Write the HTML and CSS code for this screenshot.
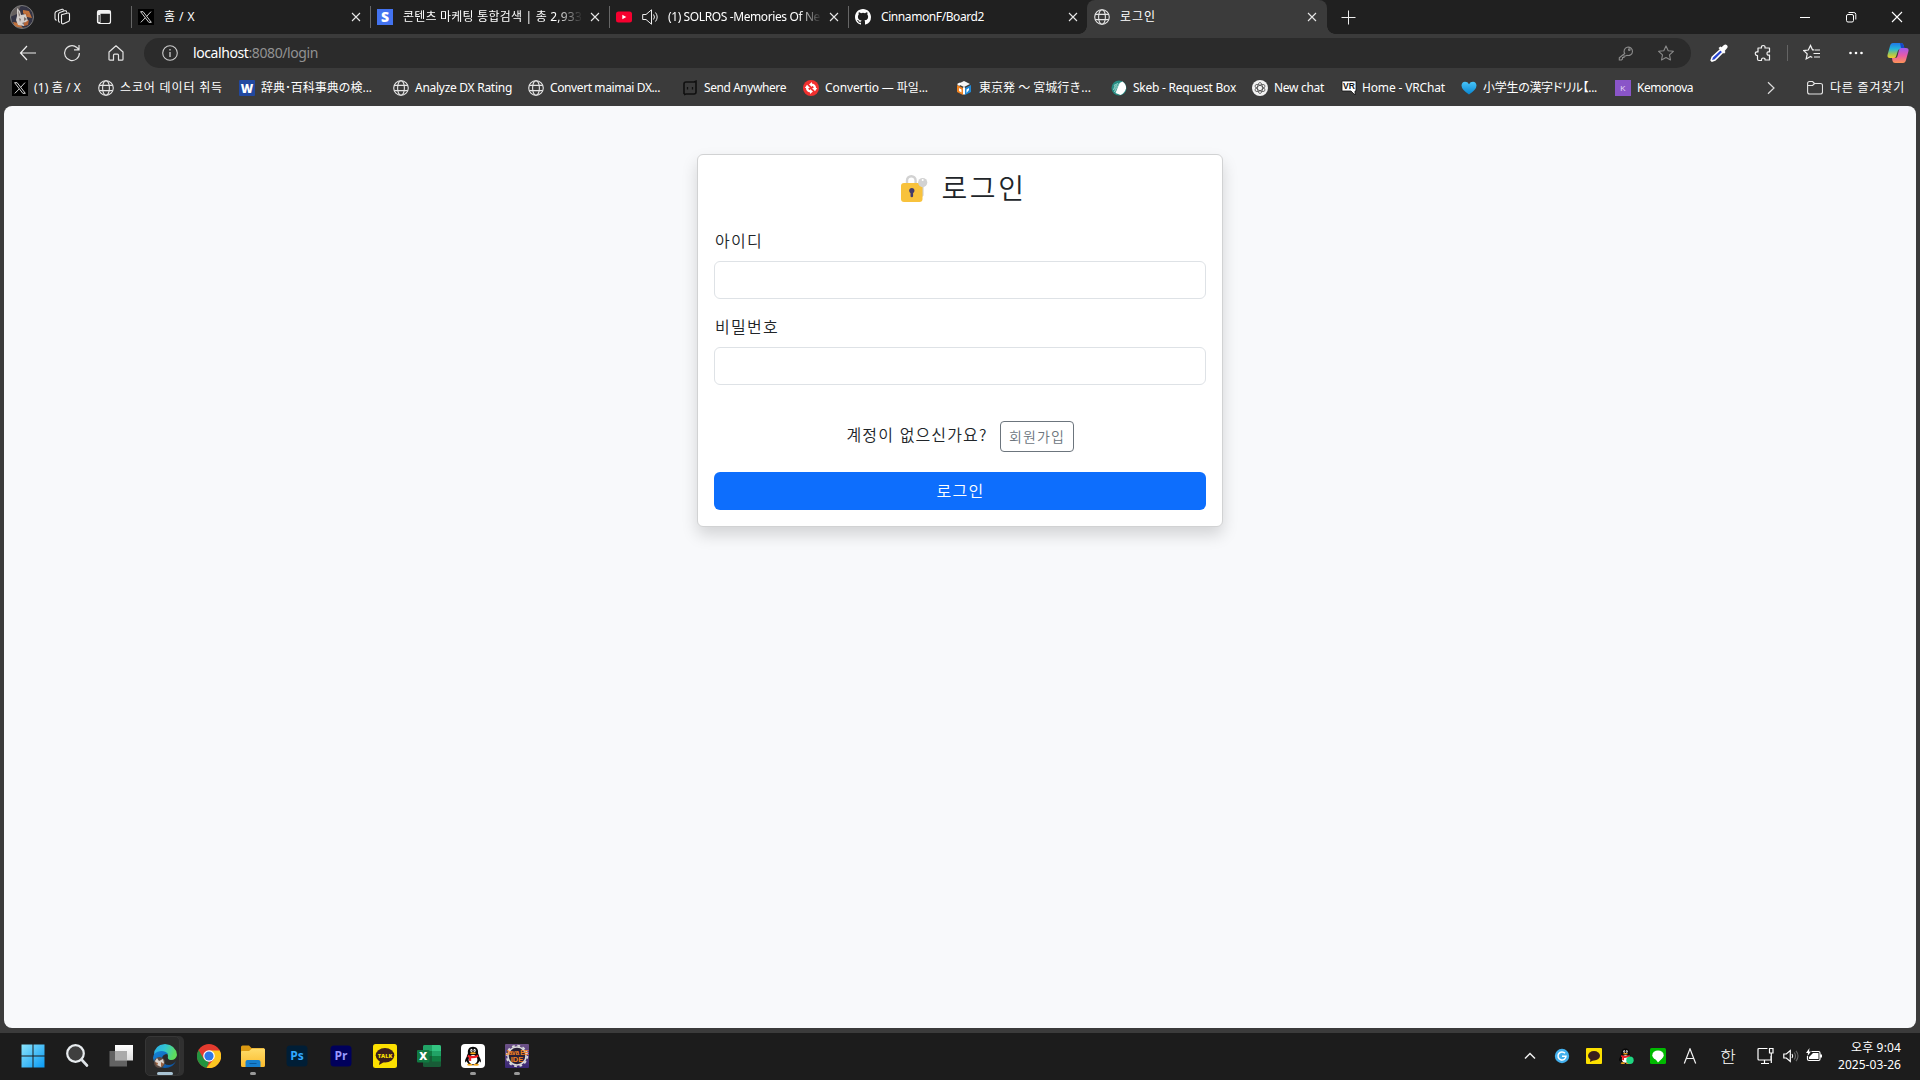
FILE: index.html
```html
<!DOCTYPE html>
<html lang="ko">
<head>
<meta charset="utf-8">
<title>로그인</title>
<link rel="stylesheet" href="styles.css">
</head>
<body>
<svg class="defs" width="0" height="0">
  <defs>
    <symbol id="globe" viewBox="0 0 16 16"><g fill="none" stroke="#e4e4e4" stroke-width="1.1"><circle cx="8" cy="8" r="7.3"/><ellipse cx="8" cy="8" rx="3.4" ry="7.3"/><path d="M1.2 5.4h13.6M1.2 10.6h13.6"/></g></symbol>
    <symbol id="close" viewBox="0 0 16 16"><path d="M4 4l8 8M12 4l-8 8" fill="none" stroke="#e8e8e8" stroke-width="1.1"/></symbol>
    <symbol id="xlogo" viewBox="0 0 16 16"><path fill="#000" d="M0 0h16v16H0z"/><path fill="none" stroke="#e8e8e8" stroke-width=".9" d="M2.6 2.7h2.5l8.2 10.6h-2.5zM13 2.6L8.7 7.3M7.3 8.8L2.8 13.4"/></symbol>
    <symbol id="penguin" viewBox="0 0 24 24"><path d="M5 13c-2 3-2 5-1 6l2-3zM19 13c2 3 2 5 1 6l-2-3z" fill="#080808"/><path d="M12 2c-4 0-6 3-5.500 7C3 16 5 22 12 22s9-6 5.500-13C18 5 16 2 12 2z" fill="#080808"/><ellipse cx="12" cy="16" rx="4.800" ry="5" fill="#fff"/><ellipse cx="10.300" cy="6" rx="1.200" ry="1.800" fill="#fff"/><ellipse cx="13.700" cy="6" rx="1.200" ry="1.800" fill="#fff"/><circle cx="10.600" cy="6.300" r=".6"/><circle cx="13.400" cy="6.300" r=".6"/><ellipse cx="12" cy="9" rx="3.200" ry="1.100" fill="#f9a91a"/><path d="M6.500 10.500q5.500 3 11 0l.5 2.300q-4 2-8 1.700v3l-2.500-.3.2-3.300-1.700-.8z" fill="#ec1c24"/><ellipse cx="8.500" cy="21.500" rx="3" ry="1.100" fill="#f9a91a"/><ellipse cx="15.500" cy="21.500" rx="3" ry="1.100" fill="#f9a91a"/></symbol>
    <linearGradient id="win" x1="0" y1="0" x2="1" y2="1"><stop stop-color="#8be4fc"/><stop offset="1" stop-color="#0899f3"/></linearGradient>
    <linearGradient id="edgeTop" x1="0" y1="0" x2="1" y2=".3"><stop stop-color="#2aa9e8"/><stop offset=".5" stop-color="#31c6d4"/><stop offset="1" stop-color="#5fdd5b"/></linearGradient>
    <linearGradient id="edgeLow" x1="0" y1="0" x2="1" y2="1"><stop stop-color="#1685d8"/><stop offset="1" stop-color="#0b4f9e"/></linearGradient>
    <linearGradient id="folder" x1="0" y1="0" x2="0" y2="1"><stop stop-color="#ffdc6a"/><stop offset="1" stop-color="#fbbb2c"/></linearGradient>
    <linearGradient id="heart" x1="0" y1="0" x2="0" y2="1"><stop stop-color="#48c4f8"/><stop offset="1" stop-color="#0785d0"/></linearGradient>
    <linearGradient id="copA" x1="0" y1="0" x2="0" y2="1"><stop stop-color="#1f7ae8"/><stop offset=".4" stop-color="#25b6d8"/><stop offset=".75" stop-color="#a4c850"/><stop offset="1" stop-color="#f2cc2e"/></linearGradient>
    <linearGradient id="copB" x1="0" y1="0" x2="0" y2="1"><stop stop-color="#a05af0"/><stop offset=".5" stop-color="#e75aa9"/><stop offset="1" stop-color="#fd9356"/></linearGradient>
    <linearGradient id="paneA" x1="0" y1="0" x2="0" y2="1"><stop stop-color="#fff"/><stop offset="1" stop-color="#dcdcdc"/></linearGradient>
    <linearGradient id="eclipse" x1="0" y1="0" x2="0" y2="1"><stop stop-color="#6d5287"/><stop offset="1" stop-color="#392775"/></linearGradient>
    <clipPath id="round"><circle cx="12" cy="12" r="11.500"/></clipPath>
  </defs>
</svg>

<header class="tabstrip">
  <div class="strip-tools">
    <svg class="avatar" viewBox="0 0 24 24"><g clip-path="url(#round)"><path fill="#343445" d="M0 0h24v24H0z"/><path fill="#66605f" d="M0 0h11L7 9 0 12z"/><path fill="#c0713c" d="M13 5l6 1 3 7-5-1-4-4zM3 17l6 1 4 5-8-1z"/><path fill="#d3cdca" d="M7 3l3 3 1 4 5-1 1 4 1 3-4 5-6-1-2-5 1-4z"/><path fill="#7d706c" d="M9 13l2 1-1 3zM14 12l3 2-3 2zM8 5l2 5-1 2zM12 18l3-1-1 3z"/><path fill="#b56436" d="M14 18l5-3-1 5-4 1zM15 8l3 1-1 3z"/></g><circle cx="12" cy="12" r="11.500" fill="none" stroke="#797979"/></svg>
    <svg class="i18 at-copies" viewBox="0 0 18 18"><g fill="none" stroke="#eee" stroke-width="1.100" stroke-linejoin="round"><path d="M8.500 6.800l6.200-1.800q1.800-.3 1.800 1.500v5.300q0 1.300-1.200 1.700l-4.800 2.200q-2 .6-2-1.500z"/><path d="M13.500 4.500V3.800q-.3-1.500-2-1L6.800 4.500Q5.500 5 5.500 6.500v6.200q0 1.300 1.500 1.600"/><path d="M10.500 2.500q-.5-1.800-2.300-1L3.700 3.300Q2 4 2 5.500v5q0 1.600 1.700 1.800"/></g></svg>
    <svg class="i16 at-vertical" viewBox="0 0 16 16"><rect x="1.500" y="1.500" width="13" height="13" rx="2" fill="none" stroke="#f2f2f2" stroke-width="1.200"/><path d="M1.500 1.500h13v3.300h-13zM1.500 4h3v10h-3z" fill="#f2f2f2"/><path d="M2.500 6h1.200v7H2.500z" fill="#202020"/></svg>
  </div>
  <nav class="tabs">
    <div class="tab"><svg class="i16"><use href="#xlogo"/></svg><div class="tab-title"><span data-width="31">홈 / X</span></div><svg class="i16"><use href="#close"/></svg></div>
    <div class="tab"><svg class="i16" viewBox="0 0 16 16"><path fill="#4373f0" d="M0 0h16v16H0z"/><text x="8" y="13" text-anchor="middle" class="fav-bold" font-size="14">S</text></svg><div class="tab-title fade"><span data-width="179">콘텐츠 마케팅 통합검색 | 총 2,933</span></div><svg class="i16"><use href="#close"/></svg></div>
    <div class="tab"><svg class="i16" viewBox="0 0 16 16"><rect y="2.500" width="16" height="11" rx="2.500" fill="#f6002f"/><path d="M6.300 5.700v4.600L10.300 8z" fill="#fff"/></svg><svg class="i16" viewBox="0 0 16 16"><g fill="none" stroke="#eee" stroke-width="1"><path d="M.7 5.500H4L9.500.8v14.400L4 10.500H.7z"/><path d="M11.500 5.500q2 2.500 0 5M13.500 3.500q3.400 4.500 0 9"/></g></svg><div class="tab-title fade"><span data-width="152">(1) SOLROS -Memories Of Ne</span></div><svg class="i16"><use href="#close"/></svg></div>
    <div class="tab"><svg class="i16" viewBox="0 0 16 16"><path fill="#fff" d="M8 0C3.580 0 0 3.580 0 8c0 3.540 2.290 6.530 5.470 7.590.4.070.55-.17.55-.38 0-.19-.01-.82-.01-1.490-2.010.37-2.530-.49-2.690-.94-.09-.23-.48-.94-.82-1.130-.28-.15-.68-.52-.01-.53.63-.01 1.080.58 1.230.82.72 1.210 1.870.87 2.330.66.07-.52.28-.87.51-1.070-1.780-.2-3.640-.89-3.640-3.950 0-.87.31-1.590.82-2.150-.08-.2-.36-1.020.08-2.120 0 0 .67-.21 2.200.82a7.600 7.600 0 0 1 4 0c1.530-1.040 2.200-.82 2.200-.82.44 1.100.16 1.920.08 2.120.51.56.82 1.270.82 2.150 0 3.070-1.870 3.750-3.650 3.950.29.25.54.73.54 1.480 0 1.070-.01 1.930-.01 2.200 0 .21.15.46.55.38A8 8 0 0 0 16 8c0-4.420-3.580-8-8-8z"/></svg><div class="tab-title"><span data-width="103">CinnamonF/Board2</span></div><svg class="i16"><use href="#close"/></svg></div>
    <div class="tab active"><svg class="i16"><use href="#globe"/></svg><div class="tab-title"><span data-width="36">로그인</span></div><svg class="i16"><use href="#close"/></svg></div>
  </nav>
  <svg class="i16 new-tab" viewBox="0 0 16 16"><path d="M8.500 1.500v14M1.500 8.500h14" stroke="#eee" stroke-width="1"/></svg>
  <div class="window-buttons">
    <svg class="i12" viewBox="0 0 12 12"><path d="M1 6.500h10" stroke="#fff"/></svg>
    <svg class="i12" viewBox="0 0 12 12"><g fill="none" stroke="#fff"><rect x="1.500" y="3.500" width="7" height="7.500" rx="1.500"/><path d="M3.500 1.500h5.300q2 0 2 2v5"/></g></svg>
    <svg class="i12" viewBox="0 0 12 12"><path d="M1 1l10 10M11 1L1 11" stroke="#fff" stroke-width="1.100"/></svg>
  </div>
</header>

<section class="toolbar">
  <div class="nav-buttons">
    <svg class="i18" viewBox="0 0 18 18"><path d="M17 9H1.500M8 2L1.500 9 8 16" fill="none" stroke="#eee" stroke-width="1.200"/></svg>
    <svg class="i18" viewBox="0 0 18 18"><path d="M16.400 9A7.400 7.400 0 1 1 13.800 3.500L16 5.500M16 1v4.800h-5" fill="none" stroke="#e4e4e4" stroke-width="1.200"/></svg>
    <svg class="i18" viewBox="0 0 18 18"><path d="M2 8L9 1.800 16 8v7.200q0 1-1 1h-3.500v-5q0-1-1-1h-3q-1 0-1 1v5H3q-1 0-1-1z" fill="none" stroke="#e4e4e4" stroke-width="1.200" stroke-linejoin="round"/></svg>
  </div>
  <div class="address">
    <svg class="i16" viewBox="0 0 16 16"><circle cx="8" cy="8" r="7.300" fill="none" stroke="#ccc" stroke-width="1.100"/><path d="M8 7v5M8 4v1.600" stroke="#ccc" stroke-width="1.300"/></svg>
    <span class="url" data-width="125"><b>localhost</b>:8080/login</span>
    <svg class="i16 key" viewBox="0 0 16 16"><g fill="none" stroke="#8b8b8b" stroke-width="1.100"><path d="M6.700 8.500A4.200 4.200 0 1 1 9 10.300L7.500 11H6v1.500H4.500V14L3.500 15H1.300v-2.200z"/><circle cx="11.300" cy="4.700" r=".8"/></g></svg>
    <svg class="i16" viewBox="0 0 16 16"><path d="M8 .9l2.200 4.800 5.200.6-3.900 3.500 1 5.200L8 12.500l-4.500 2.500 1-5.200L.6 6.300l5.200-.6z" fill="none" stroke="#8b8b8b" stroke-width="1.100" stroke-linejoin="round"/></svg>
  </div>
  <div class="tool-buttons">
    <svg class="i18" viewBox="0 0 18 18"><path d="M10.500 5.500l2.500 2.500-8 8-3 1-.8-.8 1-3z" fill="#2845d0" stroke="#fff" stroke-width="1.600"/><path d="M8.500 4l2-1.500 1 .8L14 1q1.700-1 3 .3t0 3l-2.300 2.600.8 1-1.500 1.800z" fill="#fff"/></svg>
    <svg class="i18" viewBox="0 0 18 18"><path d="M3.500 3.500H7Q6.500 1 8.700 1T10.500 3.500H15v4q-2.500-.7-2.500 1.500T15 10.500v5h-4.500q.3-2-1.700-2T7 16H4.500q-1.500 0-1.500-1.500V11Q.8 11 .8 9t2.700-1.500z" transform="translate(.5 .5)" fill="none" stroke="#f2f2f2" stroke-width="1.200" stroke-linejoin="round"/></svg>
    <i class="rule"></i>
    <svg class="i18" viewBox="0 0 18 18"><path d="M11 5.800H9.500L7.500 1.500 5.300 6 .8 6.600l3.400 3.300-1 5 4.300-2.500 1.800 1M11.500 6H17M10.500 9.500H17M11 13h6" fill="none" stroke="#f2f2f2" stroke-width="1.200"/></svg>
    <svg class="i18" viewBox="0 0 18 18"><g fill="#fff"><circle cx="3.500" cy="9" r="1.300"/><circle cx="9" cy="9" r="1.300"/><circle cx="14.500" cy="9" r="1.300"/></g></svg>
    <svg class="i22" viewBox="0 0 22 22"><path d="M6 1h8q2 0 2.500 2l1 4h-4q-2 0-2.700 2L9 14.500Q8.500 16 7 16H3q-3 0-2.500-3L3 4q.7-3 3-3z" fill="url(#copA)"/><path d="M16 21H8q-2 0-2.500-2L5 16h3.500q1.500 0 2-2L12 8q.5-2 2.500-2H19q3 0 2.500 3L19 18q-.7 3-3 3z" fill="url(#copB)"/><path d="M13 1h1q2 0 2.500 2l1 3H14z" fill="#1747c8"/></svg>
  </div>
</section>

<section class="bookmarks">
  <div class="mark"><svg class="i16"><use href="#xlogo"/></svg><span data-width="47">(1) 홈 / X</span></div>
  <div class="mark"><svg class="i16"><use href="#globe"/></svg><span data-width="103">스코어 데이터 취득</span></div>
  <div class="mark"><svg class="i16" viewBox="0 0 16 16"><rect width="16" height="16" rx="1" fill="#2148a0"/><text x="8" y="12.500" text-anchor="middle" class="fav-bold" font-size="12">W</text></svg><span data-width="111" lang="ja">辞典･百科事典の検...</span></div>
  <div class="mark"><svg class="i16"><use href="#globe"/></svg><span data-width="97">Analyze DX Rating</span></div>
  <div class="mark"><svg class="i16"><use href="#globe"/></svg><span data-width="110">Convert maimai DX...</span></div>
  <div class="mark"><svg class="i16" viewBox="0 0 16 16"><g fill="none" stroke="#101010" stroke-width="1.600"><path d="M2 10V4q0-2 2-2h8l2-.8v8.600M2 14.700L4 14h8q2 0 2-2V9M2 6v8"/></g><path d="M5.500 7v2.500M10.500 7v2.500" stroke="#101010" stroke-width="1.300"/></svg><span data-width="82">Send Anywhere</span></div>
  <div class="mark"><svg class="i16" viewBox="0 0 16 16"><circle cx="8" cy="8" r="8" fill="#f1302f"/><path d="M7.500 11.500Q4 11 4 7.500M8.500 4.500Q12 5 12 8.500" fill="none" stroke="#fff" stroke-width="2.200"/><path d="M1.800 8L4 4.700 7 8zM9 8l3 3.300L14.200 8zM7 9v5l3-2.500zM9 7V2L6 4.500z" fill="#fff"/></svg><span data-width="103">Convertio — 파일...</span></div>
  <div class="mark"><svg class="i16" viewBox="0 0 16 16"><path d="M8 1l6 3-6 3-6-3z" fill="#f4f4f4"/><path d="M1 5l6 3v7l-6-3z" fill="#ef8220"/><path d="M9 8l6-3v7l-6 3z" fill="#2188d5"/><path d="M1 4l3-1.500L6 4 3 6zM3 8l2.500 1.500v3L3 11zM10.500 9.500L13 8v2l-2.500 3zM7 7l1 .5L9 7v8l-1-1-1 1z" fill="#fff"/></svg><span class="pre" data-width="112" lang="ja">東京発 ～ 宮城行き...</span></div>
  <div class="mark"><svg class="i16" viewBox="0 0 16 16"><circle cx="8" cy="8" r="7.500" fill="#278b82"/><path d="M11.500 1.600q4 3 3.500 7-1.500 5-5.500 6.400l-5-2 4-10z" fill="#fff"/><path d="M3 6l1.500-2-2 6 4-7-3 9L8.500 3" fill="none" stroke="#8fd2c8" stroke-width=".8"/></svg><span data-width="103">Skeb - Request Box</span></div>
  <div class="mark"><svg class="i16" viewBox="0 0 16 16"><circle cx="8" cy="8" r="8" fill="#f2f2f2"/><g fill="none" stroke="#3d3d3d" stroke-width=".7"><ellipse cx="8" cy="8" rx="2.500" ry="5.500"/><ellipse cx="8" cy="8" rx="2.500" ry="5.500" transform="rotate(60 8 8)"/><ellipse cx="8" cy="8" rx="2.500" ry="5.500" transform="rotate(120 8 8)"/></g></svg><span data-width="50">New chat</span></div>
  <div class="mark"><svg class="i16" viewBox="0 0 16 16"><path d="M1 1h14v10h-1v4l-4-4H1z" fill="#fff" stroke="#111" stroke-width=".8"/><text x="8" y="9.300" text-anchor="middle" class="fav-dark" font-size="8.500">VR</text></svg><span class="vr" data-width="83">Home - VRChat</span></div>
  <div class="mark"><svg class="i16" viewBox="0 0 16 16"><path d="M8 14.500Q.5 9.500.5 5.500.8 2 4 1.800 6.800 1.800 8 4.200 9.200 1.800 12 1.800q3.200.2 3.500 3.700 0 4-7.500 9z" fill="url(#heart)"/></svg><span class="tight" data-width="114" lang="ja">小学生の漢字ドリル【...</span></div>
  <div class="mark"><svg class="i16" viewBox="0 0 16 16"><path fill="#8a55c8" d="M0 0h16v16H0z"/><text x="8" y="10.800" text-anchor="middle" class="fav-k" font-size="8">K</text></svg><span data-width="56">Kemonova</span></div>
  <div class="mark-end">
    <svg class="i16" viewBox="0 0 16 16"><path d="M5 2.300L11 8l-6 5.700" fill="none" stroke="#ddd" stroke-width="1.200"/></svg>
    <i class="rule"></i>
    <svg class="i16" viewBox="0 0 16 16"><path d="M.6 4V3.500q0-2 2-2h3L7.500 3.500h6q2 0 2 2V12q0 2-2 2H2.600q-2 0-2-2zM.6 5.500h5l2-2" fill="none" stroke="#e4e4e4" stroke-width="1.100"/></svg>
    <span data-width="75">다른 즐겨찾기</span>
  </div>
</section>

<main class="viewport">
  <form class="card">
    <h3 class="title">
      <svg class="lock" viewBox="0 0 28 28"><path d="M7 12V6.500a4.300 4.300 0 0 1 8.600 0V12" fill="none" stroke="#d2d2d2" stroke-width="2.400"/><path d="M19 9h4.600v12.500L22 23h-3z" fill="#d0d0d0"/><rect x="1" y="9" width="21.500" height="19" rx="3" fill="#f8c23c"/><circle cx="22.700" cy="8.600" r="4.600" fill="#d2d2d2"/><circle cx="22.700" cy="6" r="1" fill="#fff"/><circle cx="11.800" cy="16.500" r="2.600" fill="#433b6b"/><path d="M11.800 17v5" stroke="#433b6b" stroke-width="2.600" stroke-linecap="round"/></svg>
      <span data-width="85">로그인</span>
    </h3>
    <div class="field"><label for="uid"><span data-width="48">아이디</span></label><input id="uid" type="text"></div>
    <div class="field"><label for="pw"><span data-width="64">비밀번호</span></label><input id="pw" type="password"></div>
    <p class="join"><span class="join-text" data-width="141">계정이 없으신가요?</span><a class="join-button"><span data-width="56">회원가입</span></a></p>
    <button class="submit" type="button"><span data-width="48">로그인</span></button>
  </form>
</main>

<footer class="taskbar">
  <div class="apps">
    <div class="app"><svg class="i24" viewBox="0 0 24 24"><path fill="url(#win)" d="M.5.500h11v11H.5zM12.500.500h11v11h-11zM.5 12.500h11v11H.5zM12.500 12.500h11v11h-11z"/></svg></div>
    <div class="app"><svg class="i24" viewBox="0 0 24 24"><circle cx="10.500" cy="9.500" r="8.300" fill="#3f3f3f" stroke="#e8ecef" stroke-width="2.200"/><path d="M16.500 15.500l5.500 6" stroke="#dfe4e8" stroke-width="2.600" stroke-linecap="round"/></svg></div>
    <div class="app"><svg class="i24" viewBox="0 0 24 24"><path fill="url(#paneA)" d="M6 1h18v15.500H6z"/><path fill="#6e6e6e" fill-opacity=".85" d="M.5 7H18v15.500H.5z"/><path fill="#aaa" d="M6 7h12v9.500H6z"/></svg></div>
    <div class="app current"><svg class="i24" viewBox="0 0 24 24"><path d="M1 11Q1 1 12 0q11 1 12 11-1 5-6 5-4 0-3-4 0-3-4-4-5-1-10 3z" fill="url(#edgeTop)"/><path d="M0 14Q0 8 8 7q5 0 7 3-6 0-6 5 1 6 7 6 4 0 7-4-3 7-11 7Q1 23 0 14z" fill="url(#edgeLow)"/><circle cx="6.500" cy="18.500" r="5.500" fill="#5a4a43"/><path d="M4 14l2 3 4-2 1 4-3 4-4-2-2-4z" fill="#d9d3cd"/><path d="M8 18l3 2-3 3zM2 18l3 1-1 3z" fill="#99603e"/></svg><i class="bar"></i></div>
    <div class="app"><svg class="i24" viewBox="0 0 24 24"><circle cx="12" cy="12" r="12" fill="#e33b2e"/><path d="M1.600 6L6.800 15l5.200 3-2.500 5.900A12 12 0 0 1 1.600 6z" fill="#23943f"/><path d="M12 6.500h10.700A12 12 0 0 1 9.500 23.800L17 15z" fill="#fdc621"/><circle cx="12" cy="12" r="5.800" fill="#fff"/><circle cx="12" cy="12" r="4.600" fill="#2d77e8"/></svg></div>
    <div class="app"><svg class="i24" viewBox="0 0 24 24"><path d="M0 3q0-1.500 1.500-1.500H8L10.500 4H23v6H0z" fill="#dc9a12"/><path d="M0 8q0-1 1-1h7l3-2.500h12q1 0 1 1v16q0 1.500-1.500 1.500h-21Q0 23 0 21.500z" fill="url(#folder)"/><path d="M4.500 23v-5q0-2 2-2h11q2 0 2 2v5z" fill="#1680cf"/><path d="M8.500 19.500h7" stroke="#0b5a9c"/></svg><i class="dot"></i></div>
    <div class="app"><svg class="i24" viewBox="0 0 24 24"><rect x="1.500" y="1.500" width="21" height="21" rx="3.500" fill="#001e36"/><text x="12" y="16" text-anchor="middle" font-size="12" class="adobe ps">Ps</text></svg></div>
    <div class="app"><svg class="i24" viewBox="0 0 24 24"><rect x="1.500" y="1.500" width="21" height="21" rx="3.500" fill="#00005b"/><text x="12" y="16" text-anchor="middle" font-size="12" class="adobe pr">Pr</text></svg></div>
    <div class="app"><svg class="i24" viewBox="0 0 24 24"><rect width="24" height="24" rx="2.500" fill="#fce000"/><ellipse cx="12" cy="11.300" rx="9.300" ry="7.300" fill="#3a1d1d"/><path d="M7 16l-1 5 5-3z" fill="#3a1d1d"/><text x="12" y="13.500" text-anchor="middle" font-size="5.600" class="talk">TALK</text></svg></div>
    <div class="app"><svg class="i24" viewBox="0 0 24 24"><rect x="6" y="1" width="18" height="22" rx="1.500" fill="#185c37"/><path d="M6 7V2.500Q6 1 7.500 1H15v11H6z" fill="#21a366"/><path d="M15 1h7.500Q24 1 24 2.500V7h-9z" fill="#33c481"/><path d="M15 7h9v5h-9z" fill="#21a366"/><path d="M15 12h9v5.500h-9zM6 7h9v5H6z" fill="#107c41"/><rect y="6" width="12.500" height="12.500" rx="1" fill="#117a42"/><text x="6.200" y="16" text-anchor="middle" font-size="11" class="fav-bold">X</text></svg></div>
    <div class="app"><svg class="i24" viewBox="0 0 24 24"><rect width="24" height="24" rx="4" fill="#fff"/><use href="#penguin" x="1" y="1" width="22" height="22"/></svg><i class="dot"></i></div>
    <div class="app"><svg class="i24" viewBox="0 0 24 24"><rect width="24" height="24" rx="1" fill="url(#eclipse)"/><circle cx="12" cy="12" r="9" fill="#292038" stroke="#d9d9d9" stroke-width="1.500"/><circle cx="12" cy="12" r="10.300" fill="none" stroke="#d9d9d9" stroke-width="1.800" stroke-dasharray="2.700 2.700"/><text x="12" y="11" text-anchor="middle" font-size="6.500" textLength="23" class="ide">Java EE</text><text x="12" y="17.500" text-anchor="middle" font-size="7.500" class="ide">IDE</text></svg><i class="dot"></i></div>
  </div>
  <div class="tray">
    <svg class="i16" viewBox="0 0 16 16"><path d="M3 10.500l5-5 5 5" fill="none" stroke="#eee" stroke-width="1.500"/></svg>
    <svg class="i16" viewBox="0 0 16 16"><circle cx="8" cy="8" r="7.200" fill="#43b0ee"/><path d="M11 5.300A4 4 0 1 0 12 8.300H8" fill="none" stroke="#fff" stroke-width="1.500"/></svg>
    <svg class="i16" viewBox="0 0 16 16"><rect width="16" height="16" rx="1" fill="#fce000"/><ellipse cx="8" cy="7.700" rx="6" ry="4.700" fill="#3a1d1d"/><path d="M4.500 10.500L4 14l4-2z" fill="#3a1d1d"/></svg>
    <svg class="i16" viewBox="0 0 16 16"><use href="#penguin" x="-1.500" y="-1" width="18" height="18"/><circle cx="12" cy="12.300" r="3.700" fill="#1fd682"/></svg>
    <svg class="i16" viewBox="0 0 16 16"><rect width="16" height="16" rx="1.500" fill="#00b900"/><ellipse cx="8" cy="7.200" rx="5.700" ry="4.800" fill="#fff"/><path d="M5 10.500h7L8 14.500z" fill="#fff"/></svg>
    <svg class="i16" viewBox="0 0 16 16"><path d="M2.300 15.500L8 .8l5.700 14.700M4.300 10.500h7.400" fill="none" stroke="#f2f2f2" stroke-width="1.200"/></svg>
    <span class="ime">한</span>
    <svg class="i18 net" viewBox="0 0 18 18"><path d="M10.500 1.500H2q-1 0-1 1v9.500q0 1 1 1h12V9M7.500 13v3M4 16.500h8M12.500 1.500H16V6h-3.500zM14.300 6v10" fill="none" stroke="#fff" stroke-width="1.200"/></svg>
    <svg class="i16" viewBox="0 0 16 16"><path d="M.8 6h2.500l4-3.500v11l-4-3.500H.8z" fill="none" stroke="#fff" stroke-width="1.200"/><path d="M9 6q1.500 2 0 4" fill="none" stroke="#fff" stroke-width="1.100"/><path d="M11.300 4.500q2.400 3.500 0 7M13 2.800q4 5 0 10.400" fill="none" stroke="#666" stroke-width="1.100"/></svg>
    <svg class="i16" viewBox="0 0 16 16"><path d="M5.500 3.500h7q1.500 0 1.500 1.500v6q0 1.500-1.500 1.500H3q-1.500 0-1.500-1.500V8" fill="none" stroke="#fff" stroke-width="1.200"/><path d="M7 5h5.500v6H3V9l3.500-3.500zM14 6.500h2v3h-2zM3.500 0L0 5h2L1.500 8 5 3.500H3z" fill="#fff"/></svg>
    <div class="clock"><span data-width="50">오후 9:04</span><span data-width="63">2025-03-26</span></div>
  </div>
</footer>
<script src="labels.js"></script>
</body>
</html>
```
FILE: styles.css
```css
* { box-sizing: border-box; }

body {
  margin: 0;
  width: 1920px;
  height: 1080px;
  overflow: hidden;
  display: flex;
  flex-direction: column;
  background: #3b3b3b;
  color: #fff;
  font: 12px/16px "Noto Sans", "Noto Sans CJK KR", sans-serif;
}

svg { display: block; flex: none; }
.defs { position: absolute; }
[data-width] { display: inline-block; white-space: nowrap; }
:lang(ja) { font-family: "Noto Sans", "Noto Sans CJK JP", sans-serif; }
.i12 { width: 12px; height: 12px; }
.i16 { width: 16px; height: 16px; }
.i18 { width: 18px; height: 18px; }
.i22 { width: 22px; height: 22px; }
.i24 { width: 24px; height: 24px; }
.fav-bold { fill: #fff; font-family: "Open Sans", sans-serif; font-weight: 800; }
.fav-dark { fill: #111; font-family: "Liberation Sans", sans-serif; font-weight: 700; }
.fav-k { fill: #e6d9f5; font-family: "Liberation Sans", sans-serif; }

/* Tab strip */
.tabstrip { height: 34px; display: flex; align-items: center; background: #202020; }
.strip-tools { width: 131px; display: flex; align-items: center; padding-left: 10px; }
.avatar { width: 24px; height: 24px; }
.at-copies { margin-left: 19px; }
.at-vertical { margin-left: 25px; }
.tabs { display: flex; height: 34px; }
.tab {
  width: 239px;
  display: flex;
  align-items: center;
  gap: 10px;
  padding: 0 6px;
  border-left: 1px solid;
  border-image: linear-gradient(#202020 7px, #666 7px, #666 27px, #202020 27px) 1;
}
.tab-title { flex: 1; min-width: 0; white-space: nowrap; }
.fade { margin-right: -4px; -webkit-mask-image: linear-gradient(90deg, #000 86%, transparent 101%); mask-image: linear-gradient(90deg, #000 86%, transparent 101%); }
.tab.active {
  width: 240px;
  position: relative;
  border: 0;
  padding: 0 7px;
  background: #3b3b3b;
  border-radius: 8px 8px 0 0;
}
.active::before, .active::after { content: ""; position: absolute; bottom: 0; width: 8px; height: 8px; }
.active::before { left: -8px; background: radial-gradient(circle at 0 0, #202020 7.5px, #3b3b3b 8px); }
.active::after { right: -8px; background: radial-gradient(circle at 100% 0, #202020 7.5px, #3b3b3b 8px); }
.new-tab { margin-left: 13px; }
.window-buttons { margin-left: auto; display: flex; gap: 34px; padding-right: 17px; }

/* Toolbar */
.toolbar { height: 38px; display: flex; align-items: center; }
.nav-buttons { width: 144px; display: flex; gap: 26px; padding-left: 19px; }
.address {
  width: 1547px;
  height: 30px;
  display: flex;
  align-items: center;
  padding: 0 17px 0 18px;
  border-radius: 15px;
  background: #2b2b2b;
}
.url { margin-left: 15px; font-size: 14px; color: #929292; }
.url b { color: #fff; font-weight: 400; }
.key { margin: 0 24px 0 auto; }
.tool-buttons { flex: 1; display: grid; grid-template-columns: 56px 32px 16px 34px 54px 30px; justify-items: center; align-items: center; }
.rule { width: 1px; height: 16px; background: #646464; }

/* Bookmarks */
.bookmarks {
  height: 34px;
  padding: 0 16px 2px 12px;
  display: grid;
  grid-template-columns: 86px 141px 154px 135px 154px 121px 153px 155px 141px 89px 120px 154px 148px 141px;
  align-items: center;
}
.mark, .mark-end { display: flex; align-items: center; gap: 6px; }
.mark-end { gap: 14px; }
.mark-end span { margin-left: -7px; }
.pre { margin-left: 1px; }
.vr { margin-left: -1px; }
.tight { font-feature-settings: "palt"; }

/* Page */
.viewport {
  height: 922px;
  margin: 0 4px;
  padding-top: 48px;
  border-radius: 8px;
  background: #f8f9fb;
  color: #212529;
  font: 350 16px/22px "Noto Sans CJK KR", sans-serif;
}
.card {
  width: 526px;
  margin: 0 auto;
  padding: 16px;
  border: 1px solid #d1d2d3;
  border-radius: 6px;
  background: #fff;
  box-shadow: 0 8px 16px rgba(0, 0, 0, .15);
}
.title {
  height: 34px;
  margin: 0 0 24px;
  padding-left: 6px;
  display: flex;
  justify-content: center;
  align-items: center;
  gap: 14px;
  font-size: 28px;
  font-weight: 350;
  line-height: 32px;
}
.title span { padding-bottom: 2px; }
.lock { width: 28px; height: 28px; }
.field { margin-bottom: 16px; }
.field label { display: block; height: 24px; margin-bottom: 8px; padding-left: 1px; }
.field input {
  display: block;
  width: 100%;
  height: 38px;
  border: 1px solid #dee2e6;
  border-radius: 6px;
  background: #fff;
}
.join { height: 31px; margin: 36px 0 20px; display: flex; justify-content: center; align-items: flex-start; gap: 12px; }
.join-text { padding-top: 2px; }
.join-button {
  width: 74px;
  height: 31px;
  display: flex;
  justify-content: center;
  align-items: center;
  padding: 0 0 2px 1px;
  border: 1px solid #6c757d;
  border-radius: 4px;
  color: #6c757d;
  font-size: 14px;
}
.submit {
  display: block;
  width: 100%;
  height: 38px;
  padding: 0 0 2px 1px;
  border: 0;
  border-radius: 6px;
  background: #0d6efd;
  color: #fff;
  font: inherit;
}

/* Taskbar */
.taskbar { height: 47px; margin-top: 5px; display: flex; justify-content: space-between; background: #1c1c1c; }
.apps { display: flex; padding-left: 11px; }
.app { position: relative; width: 44px; height: 46px; display: flex; justify-content: center; align-items: center; }
.current::before {
  content: "";
  position: absolute;
  inset: 3px 7px 3px 2px;
  border: 1px solid #363636;
  border-radius: 5px;
  background: #2a2a2a;
  box-shadow: 4px 0 0 #303030;
}
.current svg { position: relative; }
.bar, .dot { position: absolute; bottom: 4px; height: 3px; border-radius: 2px; }
.bar { width: 16px; background: #a9c3d3; }
.dot { width: 6px; background: #999; }
.adobe { font-family: "Open Sans", sans-serif; font-weight: 700; }
.ps { fill: #31a8ff; }
.pr { fill: #9999ff; }
.talk { fill: #fce000; font-family: "Open Sans", sans-serif; font-weight: 800; }
.ide { fill: #f58220; font-family: "Liberation Sans", sans-serif; font-weight: 700; }
.tray {
  width: 406px;
  height: 46px;
  display: grid;
  grid-template-columns: repeat(6, 32px) 44px 32px 18px 28px 73px;
  justify-items: center;
  align-items: center;
}
.ime { font: 300 17px/20px "Noto Sans CJK KR", sans-serif; }
.clock { justify-self: end; display: flex; flex-direction: column; align-items: flex-end; line-height: 17px; }
```
FILE: labels.js
```js
// Spread each label's letters so that it fills its slot.
document.querySelectorAll('[data-width]').forEach(function (el) {
  var natural = el.getBoundingClientRect().width;
  var count = Array.from(el.textContent).length;
  el.style.letterSpacing = ((el.dataset.width - natural) / count) + 'px';
});
```
